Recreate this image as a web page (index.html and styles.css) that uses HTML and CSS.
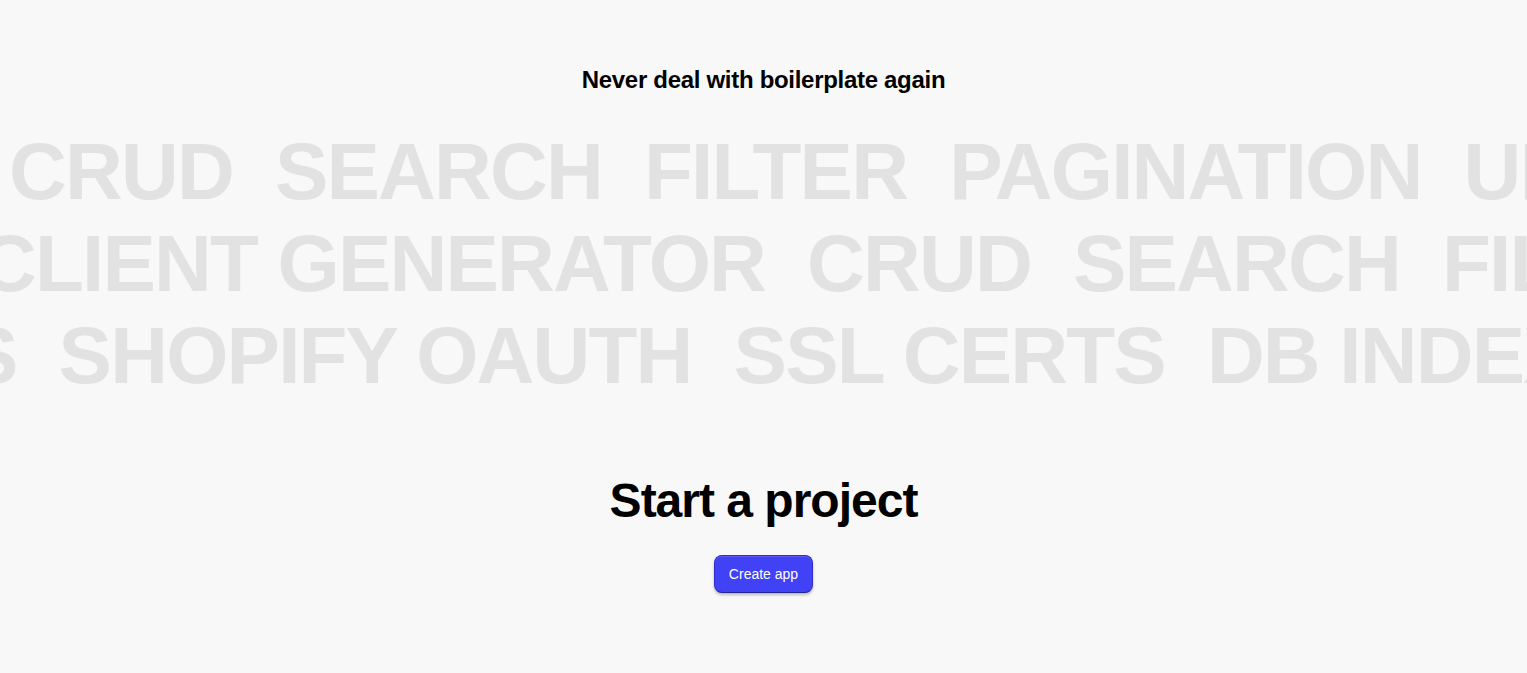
FILE: index.html
```html
<!DOCTYPE html>
<html lang="en">
<head>
<meta charset="utf-8">
<title>Never deal with boilerplate again</title>
<link rel="stylesheet" href="styles.css">
</head>
<body>
<main class="page">
  <section class="hero">
    <h2 class="hero-title">Never deal with boilerplate again</h2>
    <div class="marquee">
      <div class="marquee-row row-1">
        <span class="word">CRUD</span>
        <span class="word">SEARCH</span>
        <span class="word">FILTER</span>
        <span class="word">PAGINATION</span>
        <span class="word">UPLOADS</span>
      </div>
      <div class="marquee-row row-2">
        <span class="word">CLIENT GENERATOR</span>
        <span class="word">CRUD</span>
        <span class="word">SEARCH</span>
        <span class="word">FILTER</span>
      </div>
      <div class="marquee-row row-3">
        <span class="word">WEBHOOKS</span>
        <span class="word">SHOPIFY OAUTH</span>
        <span class="word">SSL CERTS</span>
        <span class="word">DB INDEXES</span>
      </div>
    </div>
  </section>
  <section class="cta">
    <h1 class="cta-title">Start a project</h1>
    <button class="btn-primary" type="button">Create app</button>
  </section>
</main>
</body>
</html>
```

FILE: styles.css
```css
* { box-sizing: border-box; }

html, body {
  margin: 0;
  padding: 0;
  background: #f8f8f8;
  font-family: "Liberation Sans", Arial, Helvetica, sans-serif;
  color: #000;
}

.page {
  display: flex;
  flex-direction: column;
  min-height: 673px;
  overflow: hidden;
}

.hero {
  padding-top: 64px;
  display: flex;
  flex-direction: column;
}

.hero-title {
  margin: 0;
  text-align: center;
  font-size: 24px;
  line-height: 32px;
  font-weight: 700;
  letter-spacing: -0.3px;
}

.marquee {
  margin-top: 30px;
  display: flex;
  flex-direction: column;
  overflow: hidden;
  width: 100%;
}

.marquee-row {
  display: flex;
  gap: 42px;
  white-space: nowrap;
  font-size: 80px;
  line-height: 92px;
  font-weight: 700;
  letter-spacing: -1.8px;
  color: #e2e2e2;
}

.word { flex: none; }

.row-1 { transform: translateX(9px); }
.row-2 { transform: translateX(-21px); }
.row-3 { transform: translateX(-449px); }

.cta {
  margin-top: 75px;
  display: flex;
  flex-direction: column;
  align-items: center;
}

.cta-title {
  margin: 0;
  font-size: 48px;
  line-height: 48px;
  font-weight: 700;
  letter-spacing: -1px;
}

.btn-primary {
  margin-top: 30px;
  height: 38px;
  padding: 0 14px;
  border: 1px solid #2f2fc4;
  border-bottom-color: #22229a;
  border-radius: 8px;
  background: #4141f5;
  color: #fff;
  font-family: "Liberation Sans", Arial, Helvetica, sans-serif;
  font-size: 14px;
  box-shadow: 0 2px 3px rgba(0, 0, 0, 0.25), inset 0 1px 0 rgba(255, 255, 255, 0.15);
  cursor: pointer;
}
```
